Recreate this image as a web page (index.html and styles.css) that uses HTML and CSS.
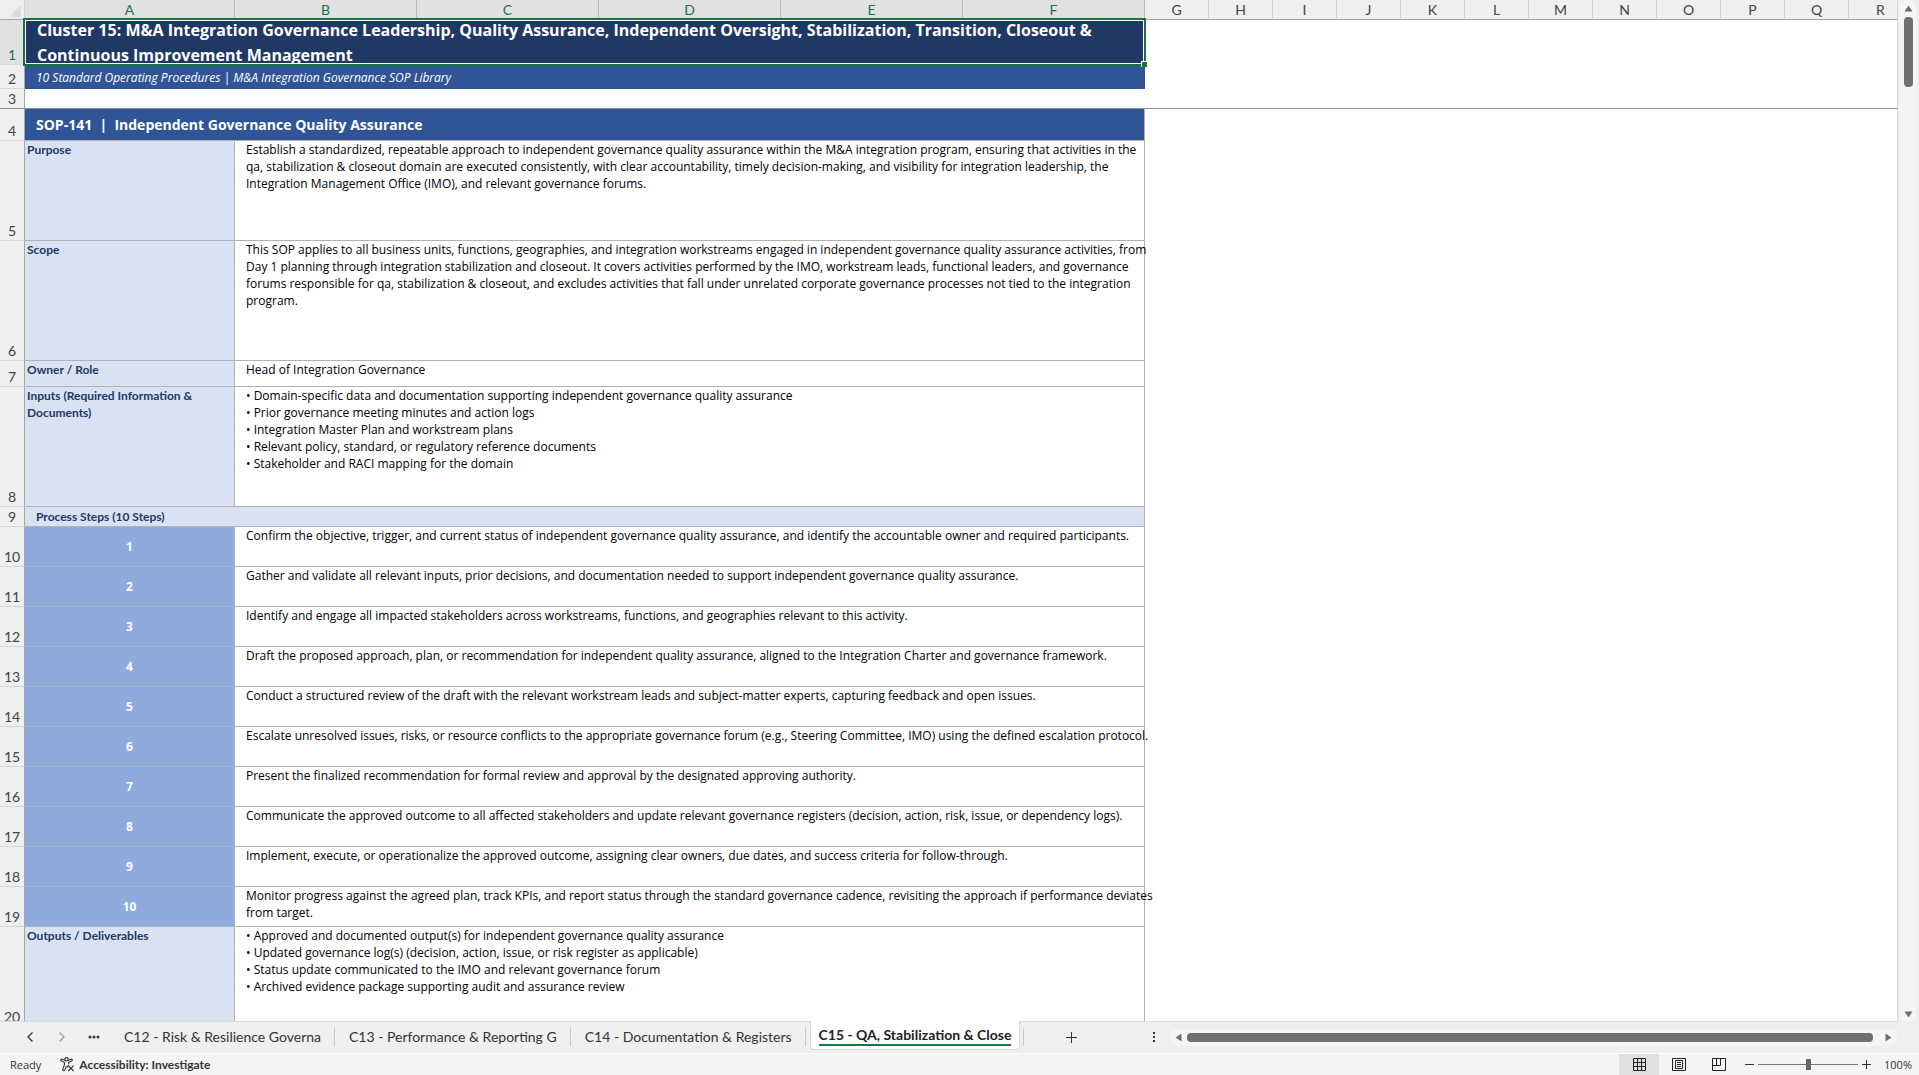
FILE: index.html
```html
<!DOCTYPE html>
<html lang="en">
<head>
    <meta charset="UTF-8">
    <meta name="viewport" content="width=device-width, initial-scale=1.0">
    <title>M&amp;A Integration Governance SOP Library</title>
    <link rel="stylesheet" href="styles.css">
</head>
<body>
    <main class="workspace">
        <div class="sheet">
            <table class="grid">
                <colgroup>
                    <col class="col-head">
                    <col class="col-a">
                    <col class="col-wide" span="5">
                    <col class="col-std" span="12">
                </colgroup>
                <thead>
                    <tr>
                        <th class="corner"><svg width="12" height="12" viewBox="0 0 12 12"><path d="M12 0V12H0Z" fill="#dcdcdc"/></svg></th>
                        <th class="sel">A</th><th class="sel">B</th><th class="sel">C</th><th class="sel">D</th><th class="sel">E</th><th class="sel">F</th>
                        <th>G</th><th>H</th><th>I</th><th>J</th><th>K</th><th>L</th><th>M</th><th>N</th><th>O</th><th>P</th><th>Q</th><th>R</th>
                    </tr>
                </thead>
                <tbody>
                    <tr class="h45">
                        <th class="sel">1</th>
                        <td class="title" colspan="6">
                            <div class="title-text">Cluster 15: M&amp;A Integration Governance Leadership, Quality Assurance, Independent Oversight, Stabilization, Transition, Closeout &amp; Continuous Improvement Management</div>
                            <div class="selection"><span class="handle"></span></div>
                        </td>
                        <td colspan="12"></td>
                    </tr>
                    <tr class="h24">
                        <th>2</th>
                        <td class="subtitle" colspan="6">10 Standard Operating Procedures | M&amp;A Integration Governance SOP Library</td>
                        <td colspan="12"></td>
                    </tr>
                    <tr class="h20 frozen">
                        <th>3</th>
                        <td colspan="6"></td>
                        <td colspan="12"></td>
                    </tr>
                    <tr class="h32">
                        <th>4</th>
                        <td class="sop" colspan="6">SOP-141&nbsp; |&nbsp; Independent Governance Quality Assurance</td>
                        <td colspan="12"></td>
                    </tr>
                    <tr class="h100">
                        <th>5</th>
                        <td class="label">Purpose</td>
                        <td class="text" colspan="5">Establish a standardized, repeatable approach to independent governance quality assurance within the M&amp;A integration program, ensuring that activities in the<br>qa, stabilization &amp; closeout domain are executed consistently, with clear accountability, timely decision-making, and visibility for integration leadership, the<br>Integration Management Office (IMO), and relevant governance forums.</td>
                        <td colspan="12"></td>
                    </tr>
                    <tr class="h120">
                        <th>6</th>
                        <td class="label">Scope</td>
                        <td class="text" colspan="5">This SOP applies to all business units, functions, geographies, and integration workstreams engaged in independent governance quality assurance activities, from<br>Day 1 planning through integration stabilization and closeout. It covers activities performed by the IMO, workstream leads, functional leaders, and governance<br>forums responsible for qa, stabilization &amp; closeout, and excludes activities that fall under unrelated corporate governance processes not tied to the integration<br>program.</td>
                        <td colspan="12"></td>
                    </tr>
                    <tr class="h26">
                        <th>7</th>
                        <td class="label">Owner / Role</td>
                        <td class="text" colspan="5">Head of Integration Governance</td>
                        <td colspan="12"></td>
                    </tr>
                    <tr class="h120">
                        <th>8</th>
                        <td class="label">Inputs (Required Information &amp; Documents)</td>
                        <td class="text" colspan="5">• Domain-specific data and documentation supporting independent governance quality assurance<br>• Prior governance meeting minutes and action logs<br>• Integration Master Plan and workstream plans<br>• Relevant policy, standard, or regulatory reference documents<br>• Stakeholder and RACI mapping for the domain</td>
                        <td colspan="12"></td>
                    </tr>
                    <tr class="h20">
                        <th>9</th>
                        <td class="section" colspan="6">Process Steps (10 Steps)</td>
                        <td colspan="12"></td>
                    </tr>
                    <tr class="h40">
                        <th>10</th>
                        <td class="step">1</td>
                        <td class="text" colspan="5">Confirm the objective, trigger, and current status of independent governance quality assurance, and identify the accountable owner and required participants.</td>
                        <td colspan="12"></td>
                    </tr>
                    <tr class="h40">
                        <th>11</th>
                        <td class="step">2</td>
                        <td class="text" colspan="5">Gather and validate all relevant inputs, prior decisions, and documentation needed to support independent governance quality assurance.</td>
                        <td colspan="12"></td>
                    </tr>
                    <tr class="h40">
                        <th>12</th>
                        <td class="step">3</td>
                        <td class="text" colspan="5">Identify and engage all impacted stakeholders across workstreams, functions, and geographies relevant to this activity.</td>
                        <td colspan="12"></td>
                    </tr>
                    <tr class="h40">
                        <th>13</th>
                        <td class="step">4</td>
                        <td class="text" colspan="5">Draft the proposed approach, plan, or recommendation for independent quality assurance, aligned to the Integration Charter and governance framework.</td>
                        <td colspan="12"></td>
                    </tr>
                    <tr class="h40">
                        <th>14</th>
                        <td class="step">5</td>
                        <td class="text" colspan="5">Conduct a structured review of the draft with the relevant workstream leads and subject-matter experts, capturing feedback and open issues.</td>
                        <td colspan="12"></td>
                    </tr>
                    <tr class="h40">
                        <th>15</th>
                        <td class="step">6</td>
                        <td class="text" colspan="5">Escalate unresolved issues, risks, or resource conflicts to the appropriate governance forum (e.g., Steering Committee, IMO) using the defined escalation protocol.</td>
                        <td colspan="12"></td>
                    </tr>
                    <tr class="h40">
                        <th>16</th>
                        <td class="step">7</td>
                        <td class="text" colspan="5">Present the finalized recommendation for formal review and approval by the designated approving authority.</td>
                        <td colspan="12"></td>
                    </tr>
                    <tr class="h40">
                        <th>17</th>
                        <td class="step">8</td>
                        <td class="text" colspan="5">Communicate the approved outcome to all affected stakeholders and update relevant governance registers (decision, action, risk, issue, or dependency logs).</td>
                        <td colspan="12"></td>
                    </tr>
                    <tr class="h40">
                        <th>18</th>
                        <td class="step">9</td>
                        <td class="text" colspan="5">Implement, execute, or operationalize the approved outcome, assigning clear owners, due dates, and success criteria for follow-through.</td>
                        <td colspan="12"></td>
                    </tr>
                    <tr class="h40">
                        <th>19</th>
                        <td class="step">10</td>
                        <td class="text" colspan="5">Monitor progress against the agreed plan, track KPIs, and report status through the standard governance cadence, revisiting the approach if performance deviates<br>from target.</td>
                        <td colspan="12"></td>
                    </tr>
                    <tr class="h100">
                        <th>20</th>
                        <td class="label">Outputs / Deliverables</td>
                        <td class="text" colspan="5">• Approved and documented output(s) for independent governance quality assurance<br>• Updated governance log(s) (decision, action, issue, or risk register as applicable)<br>• Status update communicated to the IMO and relevant governance forum<br>• Archived evidence package supporting audit and assurance review</td>
                        <td colspan="12"></td>
                    </tr>
                </tbody>
            </table>
        </div>
        <div class="vscroll">
            <svg width="9" height="7" viewBox="0 0 9 7"><path d="M4.5 0.5L8.5 6.5H0.5Z"/></svg>
            <div class="vthumb"></div>
            <svg class="end" width="9" height="7" viewBox="0 0 9 7"><path d="M4.5 6.5L8.5 0.5H0.5Z"/></svg>
        </div>
    </main>

    <nav class="tabbar">
        <div class="tabs">
            <button class="nav" aria-label="Previous sheet"><svg width="8" height="12" viewBox="0 0 8 12"><path d="M6.5 1.5L2 6L6.5 10.5" fill="none" stroke="#333" stroke-width="1.3"/></svg></button>
            <button class="nav" aria-label="Next sheet"><svg width="8" height="12" viewBox="0 0 8 12"><path d="M1.5 1.5L6 6L1.5 10.5" fill="none" stroke="#999" stroke-width="1.3"/></svg></button>
            <button class="nav" aria-label="More sheets"><svg width="12" height="4" viewBox="0 0 12 4"><g fill="#333"><circle cx="2" cy="2" r="1.5"/><circle cx="6" cy="2" r="1.5"/><circle cx="10" cy="2" r="1.5"/></g></svg></button>
            <button class="tab">C12 - Risk &amp; Resilience Governa</button>
            <button class="tab">C13 - Performance &amp; Reporting G</button>
            <button class="tab">C14 - Documentation &amp; Registers</button>
            <button class="tab active"><span>C15 - QA, Stabilization &amp; Close</span></button>
            <i class="divider"></i>
            <button class="add" aria-label="New sheet"><svg width="11" height="11" viewBox="0 0 11 11"><path d="M5.5 0V11M0 5.5H11" stroke="#333"/></svg></button>
        </div>
        <svg class="dots" width="2" height="10" viewBox="0 0 2 10"><path d="M0 0H2V2H0ZM0 4H2V6H0ZM0 8H2V10H0Z" fill="#333"/></svg>
        <div class="hscroll">
            <svg width="7" height="9" viewBox="0 0 7 9"><path d="M0.5 4.5L6.5 0.5V8.5Z"/></svg>
            <div class="hthumb"></div>
            <svg width="7" height="9" viewBox="0 0 7 9"><path d="M6.5 4.5L0.5 0.5V8.5Z"/></svg>
        </div>
    </nav>

    <footer class="status">
        <span class="ready">Ready</span>
        <button class="access">
            <svg width="15" height="15" viewBox="0 0 15 15" fill="none" stroke="#333" stroke-width="1.1">
                <circle cx="6.5" cy="2.3" r="1.7"/>
                <path d="M5 3.3L2 2.2C0.8 1.9 0.3 3.4 1.3 3.9L4.4 5.3V8L2.8 12.3C2.5 13.8 4.2 14.3 4.7 13.1L6.5 9.3M8 3.3L11 2.2C12.2 1.9 12.7 3.4 11.7 3.9L8.6 5.3V7.2"/>
                <path d="M6.8 10.5L8.3 8.6L13.6 14M13.6 8.6L8.3 14"/>
            </svg>
            Accessibility: Investigate
        </button>
        <div class="views">
            <button class="view on" aria-label="Normal"><svg width="13" height="13" viewBox="0 0 13 13"><path d="M0.5 0.5H12.5V12.5H0.5ZM4.5 0.5V12.5M8.5 0.5V12.5M0.5 4.5H12.5M0.5 8.5H12.5"/></svg></button>
            <button class="view" aria-label="Page Layout"><svg width="14" height="13" viewBox="0 0 14 13"><path d="M0.5 0.5H13.5V12.5H0.5ZM3.5 2.5H10.5V10.5H3.5ZM5 4.5H9M5 6.5H9M5 8.5H9"/></svg></button>
            <button class="view" aria-label="Page Break Preview"><svg width="14" height="13" viewBox="0 0 14 13"><path d="M0.5 0.5H13.5V12.5H0.5ZM4.5 0.5V7.5M0.5 7.5H8.5V0.5"/></svg></button>
        </div>
        <div class="zoom">
            <button class="zbtn" aria-label="Zoom out"><svg width="9" height="9" viewBox="0 0 9 9"><path d="M0 4.5H9"/></svg></button>
            <input class="slider" type="range" min="0" max="200" value="100" aria-label="Zoom">
            <button class="zbtn" aria-label="Zoom in"><svg width="9" height="9" viewBox="0 0 9 9"><path d="M0 4.5H9M4.5 0V9"/></svg></button>
        </div>
        <button class="percent">100%</button>
    </footer>
</body>
</html>
```
FILE: styles.css
```css
* { box-sizing: border-box; }
body {
    margin: 0;
    height: 100vh;
    display: flex;
    flex-direction: column;
    overflow: hidden;
    background: #efefef;
    color: #000;
    font: 12px/17px "Open Sans", sans-serif;
}
button {
    padding: 0;
    border: none;
    background: none;
    color: inherit;
    font: inherit;
    cursor: pointer;
}
svg { display: block; flex: none; }

/* grid */
.workspace {
    flex: 1;
    min-height: 0;
    display: flex;
}
.sheet {
    flex: 1;
    min-width: 0;
    overflow: hidden;
    background: #fff;
    border-right: 1px solid #dadada;
    border-bottom: 1px solid #dadada;
}
.grid {
    width: 1913px;
    table-layout: fixed;
    border-collapse: separate;
    border-spacing: 0;
}
.col-head { width: 25px; }
.col-a { width: 210px; }
.col-wide { width: 182px; }
.col-std { width: 64px; }
th, td {
    padding: 0;
    text-align: left;
    vertical-align: top;
}
th {
    background: #efefef;
    color: #444;
    font: 14px/17px Lato, sans-serif;
    text-align: center;
}
thead th {
    height: 20px;
    padding-top: 1px;
    border-right: 1px solid #d0d0d0;
    border-bottom: 1px solid #a5a5a5;
}
thead th.sel {
    border-right-color: #b8b8b8;
}
th.sel {
    background: #e1e1e1;
    color: #1a7243;
}
thead th.corner { padding: 0 3px 2px 0; vertical-align: bottom; }
.corner svg { margin-left: auto; }
tbody th {
    padding-bottom: 1px;
    border-right: 1px solid #a5a5a5;
    border-bottom: 1px solid #d6d6d6;
    vertical-align: bottom;
}
.h20 { height: 20px; }
.h24 { height: 24px; }
.h26 { height: 26px; }
.h32 { height: 32px; }
.h40 { height: 40px; }
.h45 { height: 45px; }
.h100 { height: 100px; }
.h120 { height: 120px; }
.frozen th, .frozen td { border-bottom: 1px solid #8f8f8f; }

.title {
    position: relative;
    background: #203864;
    color: #fff;
    font: bold 16px/25px "Open Sans", sans-serif;
}
.title-text {
    height: 45px;
    padding: 0 12px;
    display: flex;
    align-items: center;
    overflow: hidden;
}
.selection {
    position: absolute;
    inset: -2px -1px -1px -2px;
    border: 2px solid #1a7243;
    box-shadow: inset 0 0 0 1px #fff;
}
.handle {
    position: absolute;
    right: -3px;
    bottom: -3px;
    width: 6px;
    height: 6px;
    background: #1a7243;
    border: solid #fff;
    border-width: 1px 0 0 1px;
}
.subtitle, .sop {
    padding-left: 11px;
    background: #2f5597;
    color: #fff;
    vertical-align: middle;
}
.subtitle { font-style: italic; }
.sop { font-size: 14px; font-weight: bold; }
.sop, .label, .text, .section, .step {
    border-right: 1px solid #b2b2b2;
    border-bottom: 1px solid #b2b2b2;
}
.label, .section {
    background: #d9e2f3;
    color: #203864;
    font: bold 12px/17px Lato, sans-serif;
}
.label { padding: 0 2px; }
.section { padding-left: 11px; vertical-align: middle; }
.text { padding-left: 11px; white-space: nowrap; }
.step {
    background: #8faadc;
    color: #fff;
    font-weight: bold;
    text-align: center;
    vertical-align: middle;
}

/* scroll bars */
.vscroll {
    width: 16px;
    margin: 0 3px 0 2px;
    padding: 5px 0 4px;
    display: flex;
    flex-direction: column;
    align-items: center;
    background: #f5f5f5;
    border-radius: 8px;
    fill: #6f6f6f;
}
.vthumb {
    width: 9px;
    height: 70px;
    margin-top: 5px;
    background: #707070;
    border-radius: 4px;
}
.vscroll .end { margin-top: auto; }
.hscroll {
    flex: 1;
    height: 17px;
    margin: 0 22px 0 15px;
    padding: 0 5px;
    display: flex;
    align-items: center;
    background: #f5f5f5;
    border-radius: 8px;
    fill: #6f6f6f;
}
.hthumb {
    flex: 1;
    height: 9px;
    margin: 0 12px 0 5px;
    background: #707070;
    border-radius: 4px;
}

/* sheet tabs */
.tabbar {
    height: 31px;
    padding-bottom: 1px;
    display: flex;
    align-items: center;
    color: #333;
}
.tabs {
    width: 60%;
    height: 30px;
    padding-left: 14px;
    display: flex;
    align-items: center;
    white-space: nowrap;
}
.nav {
    width: 32px;
    height: 24px;
    display: flex;
    align-items: center;
    justify-content: center;
}
.tab {
    height: 18px;
    padding: 0 13px 0 14px;
    border-right: 1px solid #c8c8c8;
    font: 14px/18px Lato, sans-serif;
}
.tab.active {
    align-self: flex-start;
    height: 29px;
    margin: -1px 3px 0 4px;
    padding: 0 8px;
    border: 1px solid #dadada;
    border-top: none;
    border-radius: 0 0 4px 4px;
    background: #fff;
    color: #222;
    font-weight: bold;
}
.tab.active span {
    display: block;
    padding-top: 1px;
    border-bottom: 2px solid #107c41;
}
.divider {
    width: 1px;
    height: 18px;
    background: #c8c8c8;
}
.add {
    width: 22px;
    height: 22px;
    margin-left: 36px;
    display: flex;
    align-items: center;
    justify-content: center;
}
.dots { margin-left: 2px; }

/* status bar */
.status {
    height: 22px;
    padding: 0 7px 0 10px;
    display: flex;
    align-items: center;
    background: #f4f4f4;
    border-top: 1px solid #fff;
    color: #333;
    font-size: 11px;
}
.access {
    margin-left: 19px;
    display: flex;
    align-items: center;
    gap: 4px;
    font: bold 12px/17px Lato, sans-serif;
}
.views {
    margin-left: auto;
    display: flex;
}
.view {
    width: 40px;
    height: 21px;
    display: flex;
    align-items: center;
    justify-content: center;
    fill: none;
    stroke: #222;
}
.view.on { background: #dfdfdf; }
.zoom {
    margin: 0 13px 0 6px;
    display: flex;
    align-items: center;
    gap: 4px;
}
.zbtn { stroke: #333; }
.slider {
    width: 100px;
    height: 11px;
    margin: 0;
    appearance: none;
    background: linear-gradient(#777, #777) center / 100% 1px no-repeat;
}
.slider::-webkit-slider-thumb {
    appearance: none;
    width: 5px;
    height: 11px;
    background: #666;
}
```
